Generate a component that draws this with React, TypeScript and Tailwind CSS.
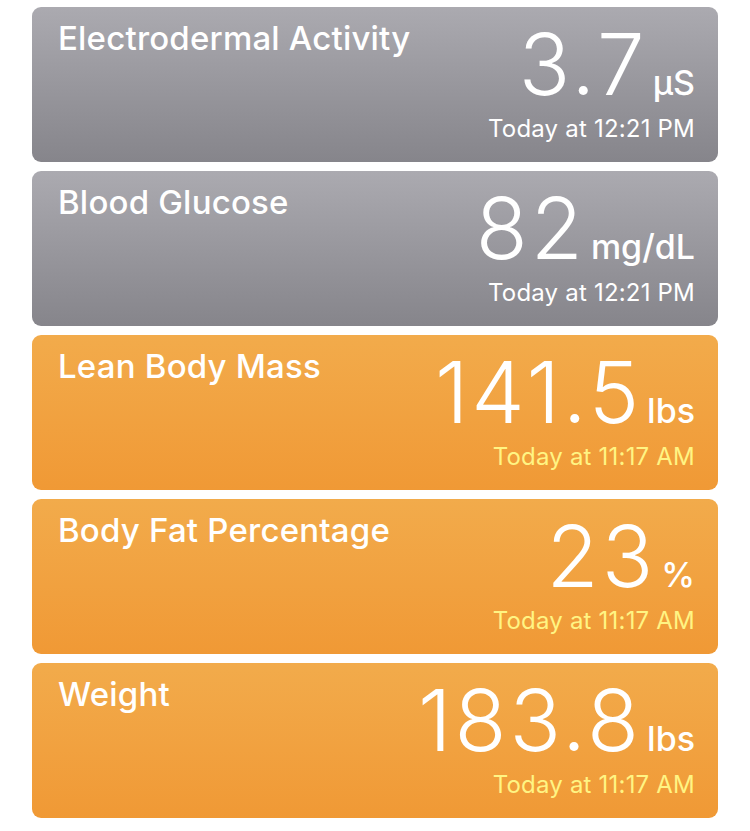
import React from "react";

type Item = {
  title: string;
  value: string;
  unit: string;
  time: string;
  kind: "gray" | "orange";
};

const items: Item[] = [
  { title: "Electrodermal Activity", value: "3.7", unit: "µS", time: "Today at 12:21 PM", kind: "gray" },
  { title: "Blood Glucose", value: "82", unit: "mg/dL", time: "Today at 12:21 PM", kind: "gray" },
  { title: "Lean Body Mass", value: "141.5", unit: "lbs", time: "Today at 11:17 AM", kind: "orange" },
  { title: "Body Fat Percentage", value: "23", unit: "%", time: "Today at 11:17 AM", kind: "orange" },
  { title: "Weight", value: "183.8", unit: "lbs", time: "Today at 11:17 AM", kind: "orange" },
];

function Card({ item }: { item: Item }) {
  const gray = item.kind === "gray";
  return (
    <div
      className={
        gray
          ? "h-[155px] rounded-[9px] bg-gradient-to-b from-[#abaab0] to-[#86858b] pl-[26px] pr-[23px] flex justify-between"
          : "h-[155px] rounded-[9px] bg-gradient-to-b from-[#f2ab4b] to-[#f09935] pl-[26px] pr-[23px] flex justify-between"
      }
    >
      <div className="pt-[12px] text-[33px] leading-[38px] font-medium text-white tracking-[0.2px]">
        {item.title}
      </div>
      <div className="flex flex-col items-end pt-[18px]">
        <div className="flex items-baseline text-white">
          <span className="text-[85px] leading-[80px] font-light tracking-[3px]">{item.value}</span>
          <span className="ml-[5px] text-[34px] leading-[36px] font-medium">{item.unit}</span>
        </div>
        <div
          className={
            gray
              ? "mt-[10px] text-[24px] leading-[28px] text-white tracking-[0.2px]"
              : "mt-[10px] text-[24px] leading-[28px] text-[#fff483] tracking-[0.2px]"
          }
        >
          {item.time}
        </div>
      </div>
    </div>
  );
}

export default function App() {
  return (
    <div
      className="w-[750px] h-[831px] bg-white pl-[32px] pr-[32px] pt-[7px] flex flex-col gap-[9px]"
      style={{ fontFamily: "Inter, 'Noto Sans', sans-serif" }}
    >
      {items.map((it) => (
        <Card key={it.title} item={it} />
      ))}
    </div>
  );
}
